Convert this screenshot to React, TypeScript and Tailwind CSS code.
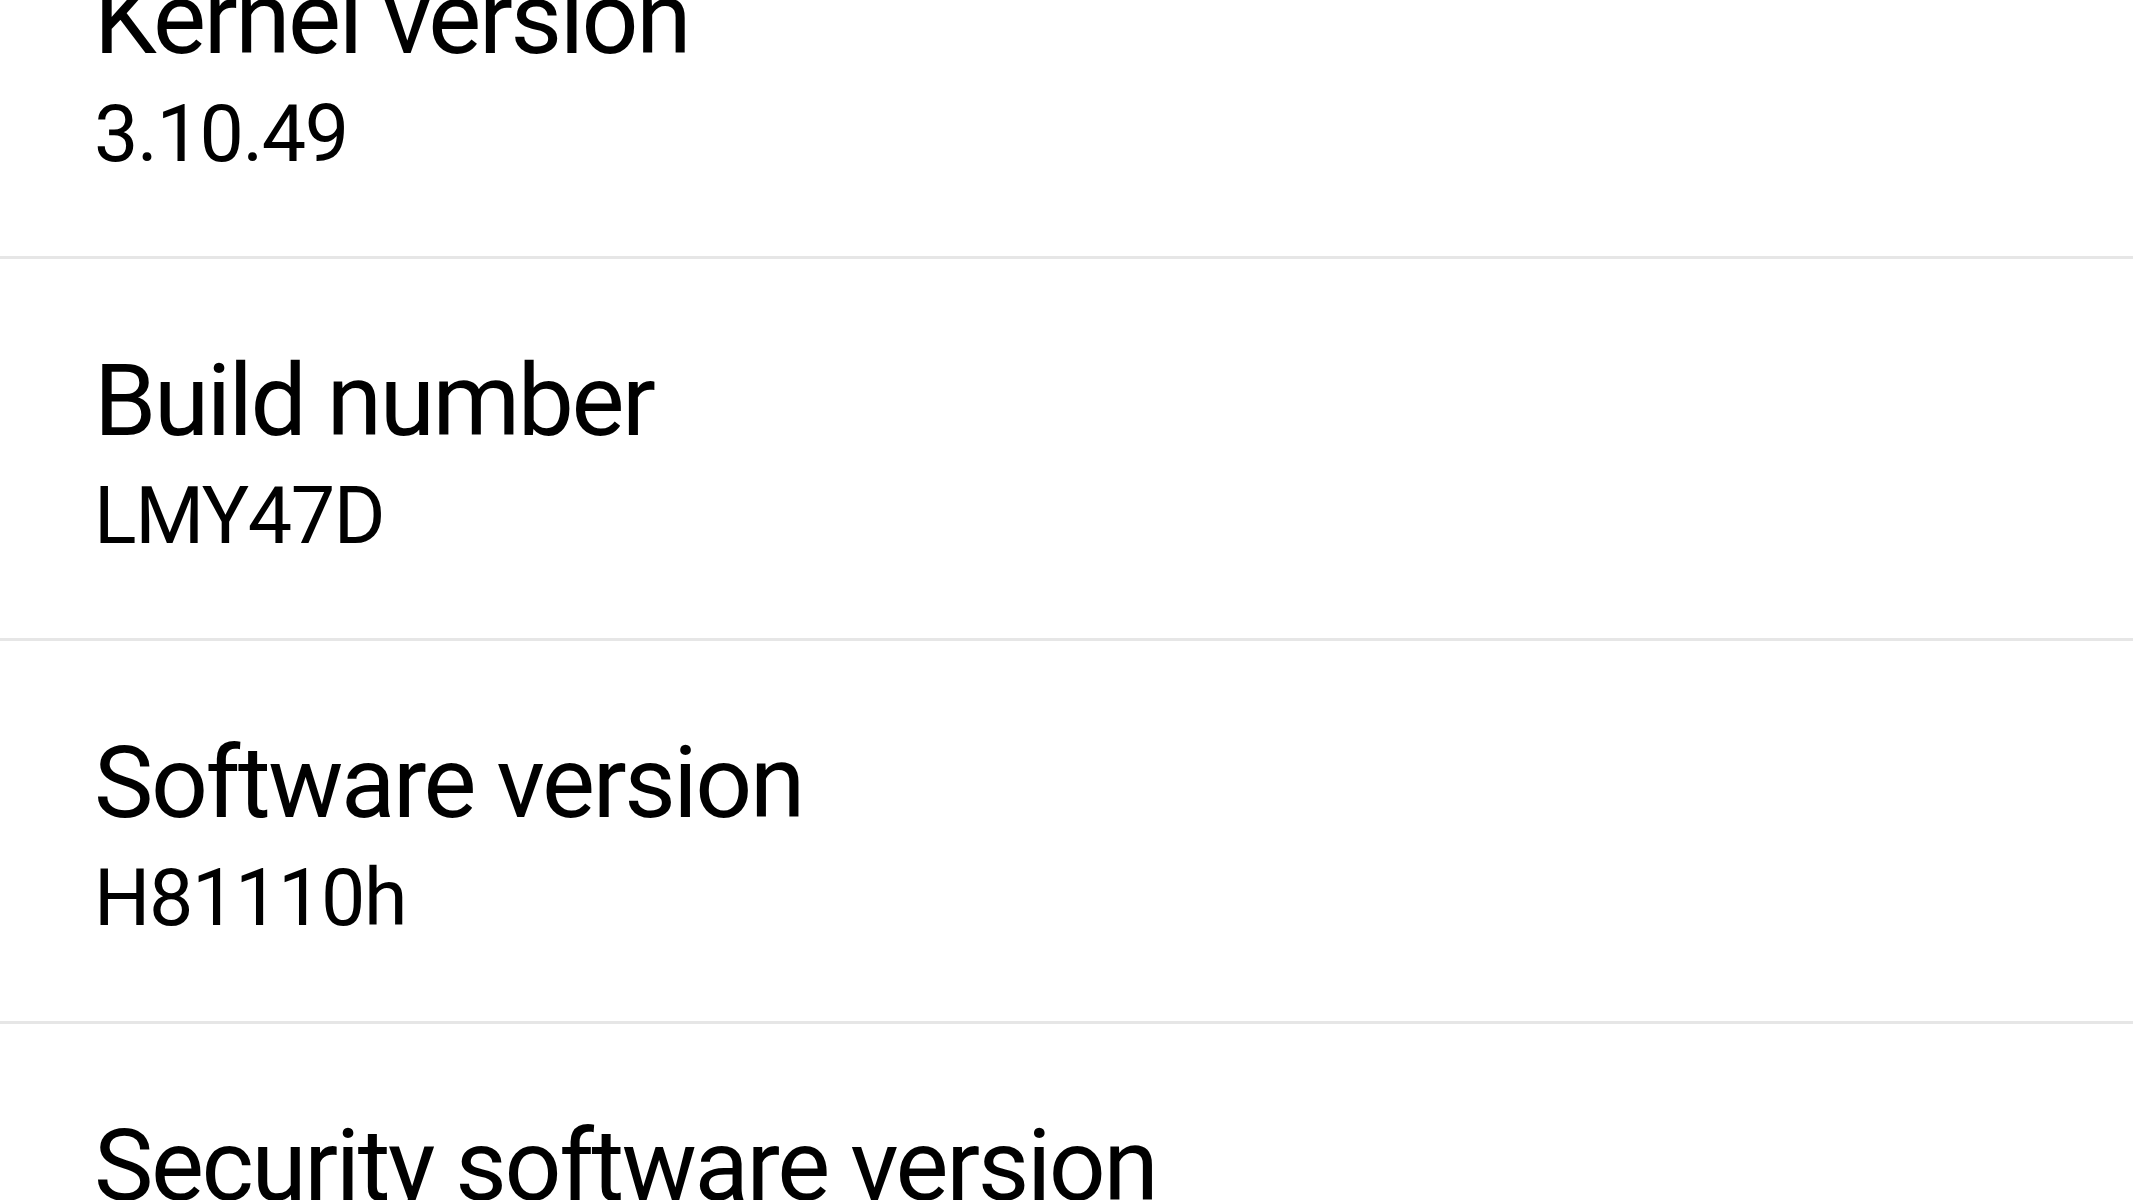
import React from "react";

type Row = { title: string; value?: string; h: string };

const rows: Row[] = [
  { title: "Kernel version", value: "3.10.49", h: "h-[382px]" },
  { title: "Build number", value: "LMY47D", h: "h-[382px]" },
  { title: "Software version", value: "H81110h", h: "h-[383px]" },
  { title: "Security software version", value: "", h: "h-[383px]" },
];

export default function App() {
  return (
    <div
      className="w-[2133px] h-[1200px] overflow-hidden bg-white text-black"
      style={{ fontFamily: "Roboto, 'Noto Sans', sans-serif" }}
    >
      <div className="-mt-[123px] flex flex-col">
        {rows.map((r) => (
          <div
            key={r.title}
            className={`${r.h} shrink-0 border-b-[3px] border-[#e6e6e6] pl-[94px] pt-[82px]`}
          >
            <div className="text-[100px] leading-[120px] font-normal tracking-[-2.4px] whitespace-nowrap">
              {r.title}
            </div>
            {r.value ? (
              <div className="mt-[7px] text-[79px] leading-[96px] font-normal tracking-[-1.4px] whitespace-nowrap">
                {r.value}
              </div>
            ) : null}
          </div>
        ))}
      </div>
    </div>
  );
}
